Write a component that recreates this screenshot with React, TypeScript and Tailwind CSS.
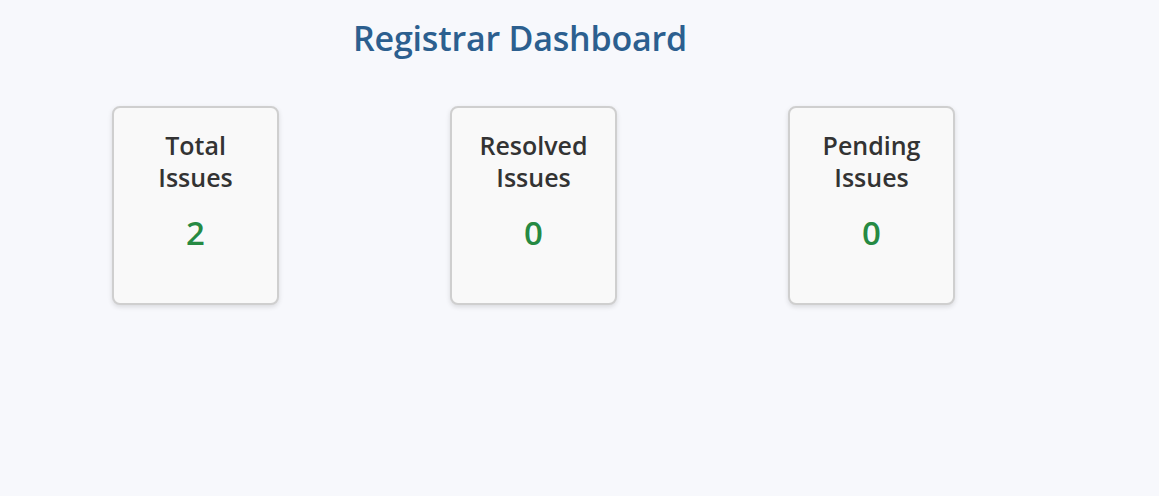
const stats = [
  { label: 'Total Issues', value: 2 },
  { label: 'Resolved Issues', value: 0 },
  { label: 'Pending Issues', value: 0 },
];

export default function App() {
  return (
    <div className="min-h-screen bg-[#f7f8fc] font-['Open_Sans',sans-serif]">
      <div className="w-[1040px] pt-[16px]">
        <h1 className="text-center text-[34px] leading-[44px] font-semibold tracking-[-0.2px] text-[#2c5f8f]">
          Registrar Dashboard
        </h1>
        <div className="flex gap-[171px] pl-[112px] mt-[46px]">
          {stats.map((s) => (
            <div
              key={s.label}
              className="w-[167px] h-[199px] rounded-lg border-2 border-[#cfcfcf] bg-[#f9f9f9] shadow-[0_2px_5px_rgba(0,0,0,0.12)] flex flex-col items-center pt-[21px]"
            >
              <div className="w-[124px] text-center text-[25px] leading-[32px] font-semibold text-[#333]">
                {s.label}
              </div>
              <div className="mt-[22px] text-[33px] leading-[36px] font-semibold text-[#268a43]">
                {s.value}
              </div>
            </div>
          ))}
        </div>
      </div>
    </div>
  );
}
